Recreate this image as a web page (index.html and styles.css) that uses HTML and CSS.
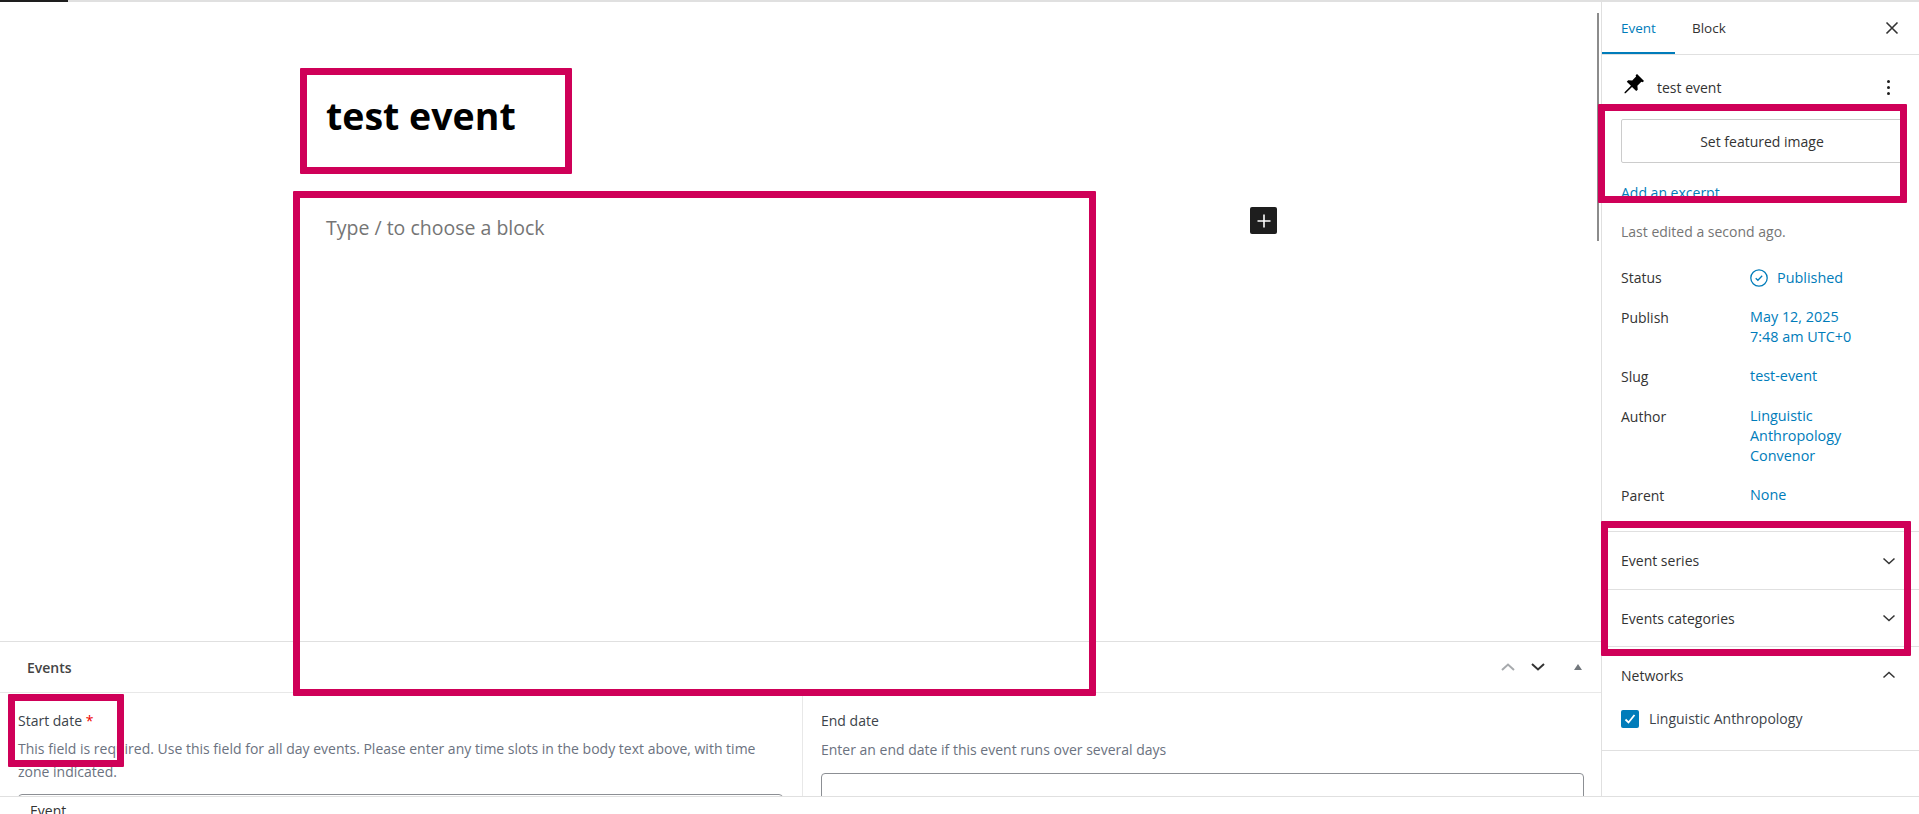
FILE: index.html
```html
<!DOCTYPE html>
<html lang="en">
<head>
    <meta charset="UTF-8">
    <meta name="viewport" content="width=device-width, initial-scale=1.0">
    <title>Edit Event</title>
    <link rel="stylesheet" href="styles.css">
</head>
<body>
    <div class="progress"><div class="progress-done"></div></div>

    <div class="editor">
        <main class="main">
            <div class="canvas">
                <h1 class="post-title">test event</h1>
                <div class="block-row">
                    <p class="placeholder">Type / to choose a block</p>
                    <button class="add-block" aria-label="Add block">
                        <svg width="24" height="24" viewBox="0 0 24 24"><path d="M18.5 11.2h-5.7V5.5h-1.6v5.7H5.5v1.6h5.7v5.7h1.6v-5.7h5.7z"/></svg>
                    </button>
                </div>
            </div>

            <section class="metabox">
                <header class="metabox-head">
                    <h2>Events</h2>
                    <div class="metabox-tools">
                        <svg class="faded" width="24" height="24" viewBox="0 0 24 24"><path d="M6 15l6-5.5 6 5.5" fill="none" stroke="currentColor" stroke-width="2"/></svg>
                        <svg width="24" height="24" viewBox="0 0 24 24"><path d="M6 9l6 5.5L18 9" fill="none" stroke="currentColor" stroke-width="2"/></svg>
                        <span class="toggle-arrow"></span>
                    </div>
                </header>
                <div class="fields">
                    <div class="field field-start">
                        <label>Start date <span class="req">*</span></label>
                        <p class="hint">This field is required. Use this field for all day events. Please enter any time slots in the body text above, with time zone indicated.</p>
                        <div class="input"></div>
                    </div>
                    <div class="field field-end">
                        <label>End date</label>
                        <p class="hint">Enter an end date if this event runs over several days</p>
                        <div class="input"></div>
                    </div>
                </div>
            </section>
        </main>

        <aside class="sidebar">
            <div class="scroll-thumb"></div>
            <div class="tabs">
                <span class="tab active">Event</span>
                <span class="tab">Block</span>
                <svg class="close" width="24" height="24" viewBox="0 0 24 24"><path d="M6.5 6.5l11 11M17.5 6.5l-11 11" fill="none" stroke="currentColor" stroke-width="1.6"/></svg>
            </div>

            <div class="summary">
                <div class="summary-title">
                    <svg width="28" height="28" viewBox="0 0 24 24"><path d="M14.6 3.4l6 6-1.3 1.1-1-.4-3.4 3.3.3 3.5-1.3 1.2-3.6-3.6L4.8 20H3.9v-.9l5.5-5.5-3.6-3.6L7 8.7l3.5.3 3.3-3.4-.4-1z"/></svg>
                    <span>test event</span>
                    <span class="dots"><i></i><i></i><i></i></span>
                </div>
                <button class="featured">Set featured image</button>
                <a class="excerpt">Add an excerpt</a>
                <p class="edited">Last edited a second ago.</p>
                <dl class="meta">
                    <div class="meta-row">
                        <dt>Status</dt>
                        <dd class="status">
                            <svg width="18" height="18" viewBox="0 0 18 18"><circle cx="9" cy="9" r="8.2" fill="none" stroke="currentColor" stroke-width="1.3"/><path d="M5.7 9.2l2.2 2.1 4.3-4.6" fill="none" stroke="currentColor" stroke-width="1.3"/></svg>
                            Published
                        </dd>
                    </div>
                    <div class="meta-row">
                        <dt>Publish</dt>
                        <dd>May 12, 2025<br>7:48 am UTC+0</dd>
                    </div>
                    <div class="meta-row">
                        <dt>Slug</dt>
                        <dd>test-event</dd>
                    </div>
                    <div class="meta-row">
                        <dt>Author</dt>
                        <dd>Linguistic<br>Anthropology<br>Convenor</dd>
                    </div>
                    <div class="meta-row">
                        <dt>Parent</dt>
                        <dd>None</dd>
                    </div>
                </dl>
            </div>

            <div class="panel">
                <span>Event series</span>
                <svg width="24" height="24" viewBox="0 0 24 24"><path d="M6.5 9.5 12 14.5l5.5-5" fill="none" stroke="currentColor" stroke-width="1.5"/></svg>
            </div>
            <div class="panel panel-next">
                <span>Events categories</span>
                <svg width="24" height="24" viewBox="0 0 24 24"><path d="M6.5 9.5 12 14.5l5.5-5" fill="none" stroke="currentColor" stroke-width="1.5"/></svg>
            </div>
            <div class="panel panel-open">
                <div class="panel-head">
                    <span>Networks</span>
                    <svg width="24" height="24" viewBox="0 0 24 24"><path d="M6.5 13.5 12 8.5l5.5 5" fill="none" stroke="currentColor" stroke-width="1.5"/></svg>
                </div>
                <div class="check-row">
                    <span class="checkbox">
                        <svg width="18" height="18" viewBox="0 0 18 18"><path d="M4.5 9.5l3 3 6-7.5" fill="none" stroke="#fff" stroke-width="1.8"/></svg>
                    </span>
                    Linguistic Anthropology
                </div>
            </div>
        </aside>
    </div>

    <footer class="breadcrumb">Event</footer>

    <div class="mark mark-title"></div>
    <div class="mark mark-content"></div>
    <div class="mark mark-featured"></div>
    <div class="mark mark-panels"></div>
    <div class="mark mark-start"></div>
</body>
</html>
```

FILE: styles.css
```css
html, body {
    height: 100%;
}
body {
    margin: 0;
    height: 814px;
    overflow: hidden;
    display: flex;
    flex-direction: column;
    font-family: "Open Sans", "Noto Sans", sans-serif;
    font-size: 14px;
    color: #333;
    background: #fff;
}

.progress {
    height: 2px;
    background: #e0e0e0;
    flex: none;
}
.progress-done {
    width: 68px;
    height: 2px;
    background: #1e1e1e;
}

.editor {
    flex: 1;
    display: flex;
    min-height: 0;
}

/* main column */
.main {
    flex: 1;
    min-width: 0;
    display: flex;
    flex-direction: column;
}
.canvas {
    flex: 1;
    padding-left: 326px;
    min-height: 0;
}
.post-title {
    margin: 0;
    padding-top: 86px;
    font-size: 37.5px;
    line-height: 56px;
    font-weight: 700;
    color: #000;
}
.block-row {
    display: flex;
    align-items: flex-start;
    margin-top: 63px;
}
.placeholder {
    margin: 7px 0 0;
    width: 924px;
    font-size: 19.5px;
    line-height: 28px;
    color: #757575;
}
.add-block {
    width: 27px;
    height: 27px;
    padding: 0;
    border: none;
    border-radius: 2px;
    background: #1e1e1e;
    display: flex;
    align-items: center;
    justify-content: center;
}
.add-block svg {
    fill: #fff;
}

.metabox {
    flex: none;
    height: 154px;
    border-top: 1px solid #e0e0e0;
    overflow: hidden;
}
.metabox-head {
    height: 50px;
    display: flex;
    align-items: center;
    justify-content: space-between;
    padding: 0 19px 0 27px;
    border-bottom: 1px solid #e8e8e8;
}
.metabox-head h2 {
    margin: 0;
    font-size: 14px;
    font-weight: 600;
    color: #444;
}
.metabox-tools {
    display: flex;
    align-items: center;
    gap: 6px;
}
.metabox-tools .faded {
    color: #a7aaad;
}
.toggle-arrow {
    margin-left: 18px;
    width: 0;
    height: 0;
    border-left: 4px solid transparent;
    border-right: 4px solid transparent;
    border-bottom: 6px solid #72777c;
}
.fields {
    display: flex;
    height: 103px;
}
.field {
    flex: 1;
    padding: 18px 17px 0 18px;
    min-width: 0;
}
.field-start {
    flex: none;
    width: 765px;
    padding-right: 19px;
    border-right: 1px solid #e8e8e8;
}
.field label {
    display: block;
    color: #3c434a;
    line-height: 20px;
}
.req {
    color: #e00;
}
.hint {
    margin: 6px 0 11px;
    color: #6b7280;
    line-height: 23px;
}
.field-end .hint {
    margin: 7px 0 12px;
}
.input {
    height: 40px;
    border: 1px solid #8c8f94;
    border-radius: 4px;
}

/* sidebar */
.sidebar {
    flex: none;
    width: 317px;
    border-left: 1px solid #e0e0e0;
    position: relative;
}
.scroll-thumb {
    position: absolute;
    left: -5px;
    top: 11px;
    width: 2px;
    height: 228px;
    background: #8c8c8c;
}
.tabs {
    height: 52px;
    display: flex;
    align-items: center;
    border-bottom: 1px solid #e0e0e0;
}
.tab {
    height: 52px;
    line-height: 52px;
    padding: 0 19px;
    box-sizing: border-box;
    font-size: 13.5px;
}
.tab.active {
    color: #007cba;
    box-shadow: inset 0 -2px 0 #007cba;
}
.tab + .tab {
    padding-left: 17px;
}
.close {
    margin-left: auto;
    margin-right: 15px;
}

.summary {
    padding: 0 16px 0 19px;
    height: 477px;
    box-sizing: border-box;
    border-bottom: 1px solid #e0e0e0;
}
.summary-title {
    display: flex;
    align-items: center;
    height: 64px;
    gap: 9px;
}
.summary-title svg {
    margin: 0 0 6px -1px;
}
.dots {
    margin-left: auto;
    display: flex;
    flex-direction: column;
    gap: 3px;
    margin-right: 13px;
}
.dots i {
    width: 3px;
    height: 3px;
    border-radius: 50%;
    background: #1e1e1e;
}
.featured {
    display: block;
    width: 100%;
    height: 44px;
    padding: 0;
    border: 1px solid #ccc;
    border-radius: 2px;
    background: #fff;
    font: inherit;
    color: #333;
}
.excerpt {
    display: block;
    margin-top: 20px;
    color: #007cba;
    line-height: 20px;
}
.edited {
    margin: 19px 0 0;
    color: #757575;
    line-height: 20px;
}
.meta {
    margin: 25px 0 0;
}
.meta-row {
    display: flex;
    margin-bottom: 19px;
}
.meta-row dt {
    width: 129px;
    line-height: 20px;
    padding-top: 1px;
}
.meta-row dd {
    margin: 0;
    color: #007cba;
    line-height: 20px;
    font-size: 14.4px;
}
.status {
    display: flex;
    align-items: center;
    gap: 9px;
}

.panel {
    height: 58px;
    box-sizing: border-box;
    padding: 0 19px;
    display: flex;
    align-items: center;
    justify-content: space-between;
    border-bottom: 1px solid #e0e0e0;
}
.panel svg {
    margin-right: -1px;
}
.panel-next {
    height: 57px;
}
.panel-open {
    display: block;
    height: 104px;
}
.panel-head {
    height: 57px;
    display: flex;
    align-items: center;
    justify-content: space-between;
}
.check-row {
    display: flex;
    align-items: center;
    gap: 10px;
    margin-top: 5px;
    color: #3c434a;
}
.checkbox {
    width: 18px;
    height: 18px;
    border-radius: 2px;
    background: #007cba;
    display: block;
}
.checkbox svg {
    margin: 0;
    display: block;
}

.breadcrumb {
    flex: none;
    height: 18px;
    box-sizing: border-box;
    border-top: 1px solid #e0e0e0;
    padding-left: 30px;
    line-height: 28px;
    overflow: hidden;
}

/* review annotations laid over the screenshot */
.mark {
    position: absolute;
    box-sizing: border-box;
    border: 7px solid #cf0058;
    border-radius: 1px;
}
.mark-title {
    left: 300px;
    top: 68px;
    width: 272px;
    height: 106px;
}
.mark-content {
    left: 293px;
    top: 191px;
    width: 803px;
    height: 505px;
}
.mark-featured {
    left: 1598px;
    top: 104px;
    width: 309px;
    height: 99px;
}
.mark-panels {
    left: 1601px;
    top: 521px;
    width: 310px;
    height: 135px;
}
.mark-start {
    left: 8px;
    top: 694px;
    width: 116px;
    height: 73px;
}
```
